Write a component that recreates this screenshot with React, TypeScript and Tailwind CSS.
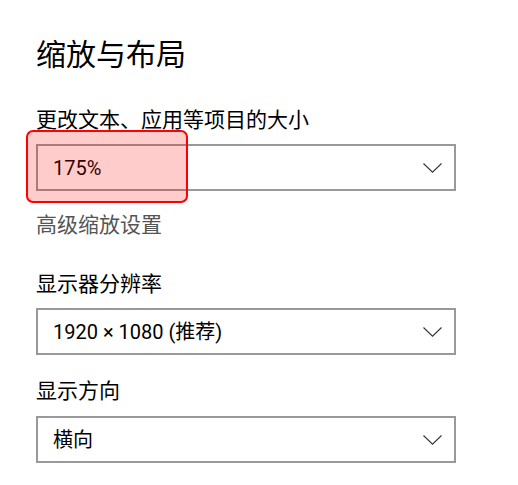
import React from 'react';

const font = { fontFamily: '"Liberation Sans", "Noto Sans CJK SC", sans-serif' };
const selectFont = { fontFamily: 'Roboto, "Noto Sans CJK SC", sans-serif' };

const Chevron = () => (
  <svg width="19" height="10" viewBox="0 0 19 10" fill="none" xmlns="http://www.w3.org/2000/svg">
    <path d="M0.5 0.5L9.5 9.2L18.5 0.5" stroke="#333" strokeWidth="1.1" />
  </svg>
);

const Select = ({ value, className = '' }: { value: string; className?: string }) => (
  <div
    className={`w-[420px] h-[47px] border-2 border-[#999999] bg-white flex items-center justify-between pl-[15px] pr-[12px] ${className}`}
  >
    <span className="text-[20px] leading-[28px] text-black" style={selectFont}>{value}</span>
    <Chevron />
  </div>
);

export default function App() {
  return (
    <div className="relative w-[518px] h-[485px] bg-white overflow-hidden" style={font}>
      <div className="flex flex-col pl-[36px] pt-[35px]">
        <h1 className="text-[30px] leading-[40px] font-normal text-black">缩放与布局</h1>

        <p className="mt-[31px] text-[21px] leading-[28px] text-black">更改文本、应用等项目的大小</p>
        <Select value="175%" className="mt-[10px]" />

        <p className="mt-[20px] text-[21px] leading-[28px] text-[#555555]">高级缩放设置</p>

        <p className="mt-[31px] text-[21px] leading-[28px] text-black">显示器分辨率</p>
        <Select value="1920 × 1080 (推荐)" className="mt-[10px]" />

        <p className="mt-[22px] text-[21px] leading-[28px] text-black">显示方向</p>
        <Select value="横向" className="mt-[11px]" />
      </div>

      {/* red highlight over the first dropdown */}
      <div className="absolute left-[26px] top-[130px] w-[162px] h-[73px] border-2 border-[#ff0000] rounded-[7px] bg-[#ff0000]/20" />
    </div>
  );
}
